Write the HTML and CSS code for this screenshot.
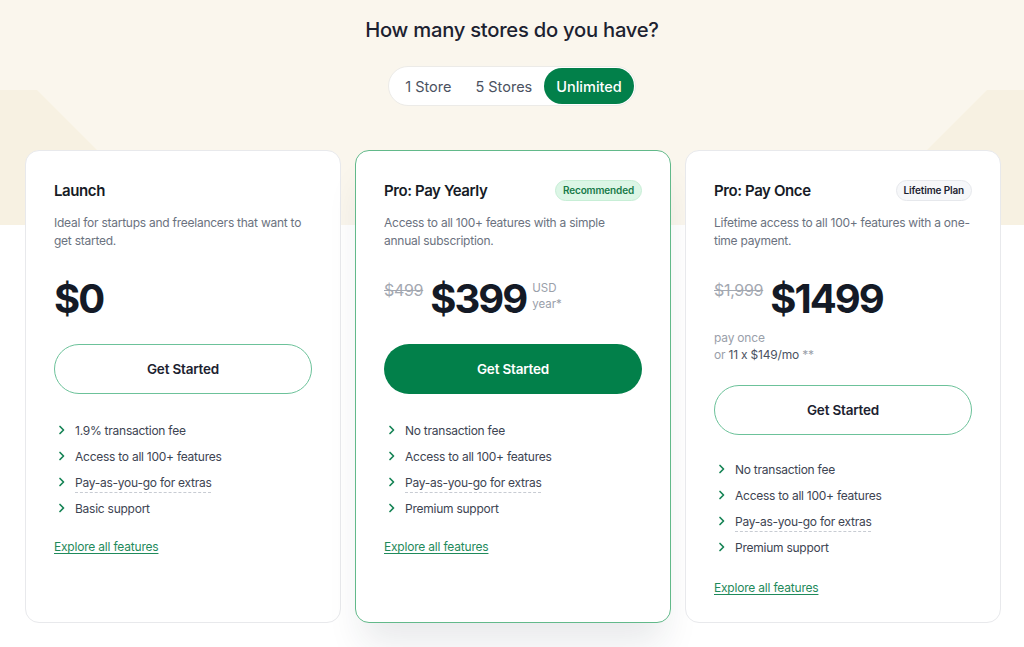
FILE: index.html
```html
<!DOCTYPE html>
<html lang="en">
<head>
<meta charset="utf-8">
<title>Pricing</title>
<link rel="stylesheet" href="styles.css">
</head>
<body>
<div class="page">
  <div class="hero-bg"></div>
  <h1 class="title">How many stores do you have?</h1>
  <div class="toggle-wrap">
    <div class="toggle">
      <span class="opt">1 Store</span>
      <span class="opt">5 Stores</span>
      <span class="opt active">Unlimited</span>
    </div>
  </div>
  <div class="cards">
    <div class="card">
      <div class="card-head"><h2 class="plan">Launch</h2></div>
      <p class="desc">Ideal for startups and freelancers that want to get started.</p>
      <div class="price-row"><span class="price">$0</span></div>
      <a class="btn btn-outline">Get Started</a>
      <ul class="features">
        <li><svg class="chev" viewBox="0 0 10 10"><path d="M3 1.5L6.5 5L3 8.5"/></svg><span>1.9% transaction fee</span></li>
        <li><svg class="chev" viewBox="0 0 10 10"><path d="M3 1.5L6.5 5L3 8.5"/></svg><span>Access to all 100+ features</span></li>
        <li><svg class="chev" viewBox="0 0 10 10"><path d="M3 1.5L6.5 5L3 8.5"/></svg><span class="dotted">Pay-as-you-go for extras</span></li>
        <li><svg class="chev" viewBox="0 0 10 10"><path d="M3 1.5L6.5 5L3 8.5"/></svg><span>Basic support</span></li>
      </ul>
      <a class="explore">Explore all features</a>
    </div>
    <div class="card featured">
      <div class="card-head"><h2 class="plan">Pro: Pay Yearly</h2><span class="badge badge-green">Recommended</span></div>
      <p class="desc">Access to all 100+ features with a simple annual subscription.</p>
      <div class="price-row"><span class="old">$499</span><span class="price">$399</span><span class="unit">USD<br>year*</span></div>
      <a class="btn btn-fill">Get Started</a>
      <ul class="features">
        <li><svg class="chev" viewBox="0 0 10 10"><path d="M3 1.5L6.5 5L3 8.5"/></svg><span>No transaction fee</span></li>
        <li><svg class="chev" viewBox="0 0 10 10"><path d="M3 1.5L6.5 5L3 8.5"/></svg><span>Access to all 100+ features</span></li>
        <li><svg class="chev" viewBox="0 0 10 10"><path d="M3 1.5L6.5 5L3 8.5"/></svg><span class="dotted">Pay-as-you-go for extras</span></li>
        <li><svg class="chev" viewBox="0 0 10 10"><path d="M3 1.5L6.5 5L3 8.5"/></svg><span>Premium support</span></li>
      </ul>
      <a class="explore">Explore all features</a>
    </div>
    <div class="card">
      <div class="card-head"><h2 class="plan">Pro: Pay Once</h2><span class="badge badge-gray">Lifetime Plan</span></div>
      <p class="desc">Lifetime access to all 100+ features with a one-time payment.</p>
      <div class="price-row"><span class="old">$1,999</span><span class="price">$1499</span></div>
      <div class="sub"><div>pay once</div><div>or <span class="dark">11 x $149/mo</span> **</div></div>
      <a class="btn btn-outline">Get Started</a>
      <ul class="features tight">
        <li><svg class="chev" viewBox="0 0 10 10"><path d="M3 1.5L6.5 5L3 8.5"/></svg><span>No transaction fee</span></li>
        <li><svg class="chev" viewBox="0 0 10 10"><path d="M3 1.5L6.5 5L3 8.5"/></svg><span>Access to all 100+ features</span></li>
        <li><svg class="chev" viewBox="0 0 10 10"><path d="M3 1.5L6.5 5L3 8.5"/></svg><span class="dotted">Pay-as-you-go for extras</span></li>
        <li><svg class="chev" viewBox="0 0 10 10"><path d="M3 1.5L6.5 5L3 8.5"/></svg><span>Premium support</span></li>
      </ul>
      <a class="explore">Explore all features</a>
    </div>
  </div>
</div>
</body>
</html>
```
FILE: styles.css
```css
* { box-sizing: border-box; }
html, body { margin: 0; padding: 0; }
body {
  background: #ffffff;
  font-family: Inter, "Noto Sans", sans-serif;
  color: #1c2230;
  width: 1024px;
  height: 647px;
  overflow: hidden;
}
.page {
  position: relative;
  padding-top: 16px;
}
.hero-bg {
  position: absolute;
  left: 0; top: 0;
  width: 1024px;
  height: 225px;
  background: #faf6ed;
  z-index: 0;
}
.hero-bg::before,
.hero-bg::after {
  content: "";
  position: absolute;
  top: 90px;
  height: 135px;
  background: #f7f1e2;
}
.hero-bg::before {
  left: 0;
  width: 172px;
  clip-path: polygon(0 0, 37px 0, 172px 135px, 0 135px);
}
.hero-bg::after {
  right: 0;
  width: 172px;
  clip-path: polygon(135px 0, 172px 0, 172px 135px, 0 135px);
}
.title {
  position: relative;
  margin: 0;
  text-align: center;
  font-size: 20.2px;
  line-height: 28px;
  font-weight: 500;
  color: #1c2230;
  letter-spacing: -0.25px;
}
.toggle-wrap {
  position: relative;
  display: flex;
  justify-content: center;
  margin-top: 22px;
}
.toggle {
  display: flex;
  align-items: center;
  height: 40px;
  padding: 1px;
  background: #fff;
  border: 1px solid #ecebe8;
  border-radius: 20px;
}
.opt {
  display: flex;
  align-items: center;
  height: 36px;
  padding: 0 12px;
  font-size: 14.5px;
  color: #4b5261;
  border-radius: 18px;
}
.opt:first-child { padding-left: 15px; }
.opt.active {
  background: #02804a;
  color: #fff;
  font-weight: 500;
  padding: 0 12px;
}
.cards {
  position: relative;
  display: grid;
  grid-template-columns: repeat(3, 316px);
  gap: 14px;
  margin: 44px 0 0 25px;
}
.card {
  display: flex;
  flex-direction: column;
  align-items: flex-start;
  min-height: 473px;
  padding: 28px 28px 0 28px;
  background: #fff;
  border: 1px solid #e8e9ec;
  border-radius: 14px;
}
.card.featured {
  border-color: #62b98a;
  box-shadow: 0 28px 36px -8px rgba(30, 40, 60, 0.10);
}
.card-head {
  display: flex;
  align-self: stretch;
  justify-content: space-between;
  align-items: center;
  height: 22px;
}
.plan {
  margin: 0;
  font-size: 15px;
  font-weight: 600;
  color: #161b26;
  letter-spacing: -0.4px;
}
.badge {
  display: inline-flex;
  align-items: center;
  height: 21px;
  padding: 0 7px;
  border-radius: 11px;
  font-size: 10px;
  font-weight: 600;
  letter-spacing: -0.15px;
}
.badge-green {
  background: #dcf6e6;
  border: 1px solid #c7eed6;
  color: #177a49;
}
.badge-gray {
  background: #f6f7f9;
  border: 1px solid #e6e8ec;
  color: #1c2230;
}
.desc {
  margin: 13px 0 0 0;
  font-size: 12px;
  line-height: 18px;
  color: #6b7280;
  max-width: 262px;
  letter-spacing: -0.25px;
}
.price-row {
  display: flex;
  align-items: flex-start;
  margin-top: 25px;
  height: 51px;
}
.price {
  font-size: 40px;
  line-height: 48px;
  font-weight: 700;
  color: #141a26;
  letter-spacing: -2px;
}
.old {
  font-size: 16px;
  line-height: 20px;
  margin-top: 5px;
  margin-right: 7px;
  color: #a3a8b1;
  text-decoration: line-through;
  letter-spacing: -0.3px;
}
.unit {
  margin-left: 6px;
  margin-top: 5px;
  font-size: 11.5px;
  line-height: 16px;
  color: #9aa0aa;
}
.sub {
  margin-top: 3px;
  font-size: 12px;
  line-height: 17px;
  color: #9aa0aa;
  letter-spacing: -0.2px;
}
.sub .dark { color: #4b5261; }
.btn {
  display: flex;
  align-items: center;
  justify-content: center;
  align-self: stretch;
  height: 50px;
  margin-top: 18px;
  border-radius: 25px;
  font-size: 13.5px;
  font-weight: 600;
  color: #1c2230;
  letter-spacing: -0.2px;
}
.card .sub + .btn { margin-top: 22px; }
.btn-outline {
  border: 1px solid #6cc29a;
  background: #fff;
}
.btn-fill {
  background: #02804a;
  color: #fff;
}
.features {
  list-style: none;
  margin: 23px 0 0 0;
  padding: 0;
}
.features.tight { margin-top: 21px; }
.features.tight + .explore { margin-top: 19px; }
.features li {
  display: flex;
  align-items: center;
  height: 26px;
  font-size: 12px;
  color: #3d4452;
  letter-spacing: -0.25px;
}
.chev {
  width: 10px;
  height: 10px;
  margin-left: 3px;
  margin-right: 8px;
  fill: none;
  stroke: #178456;
  stroke-width: 1.7;
  stroke-linecap: round;
  stroke-linejoin: round;
}
.dotted {
  text-decoration: underline dashed #c8ccd3;
  text-underline-offset: 5px;
  text-decoration-thickness: 1px;
}
.explore {
  margin-top: 17px;
  font-size: 12px;
  line-height: 18px;
  color: #1f8a5b;
  text-decoration: underline;
  text-underline-offset: 2px;
  letter-spacing: -0.2px;
}
```
